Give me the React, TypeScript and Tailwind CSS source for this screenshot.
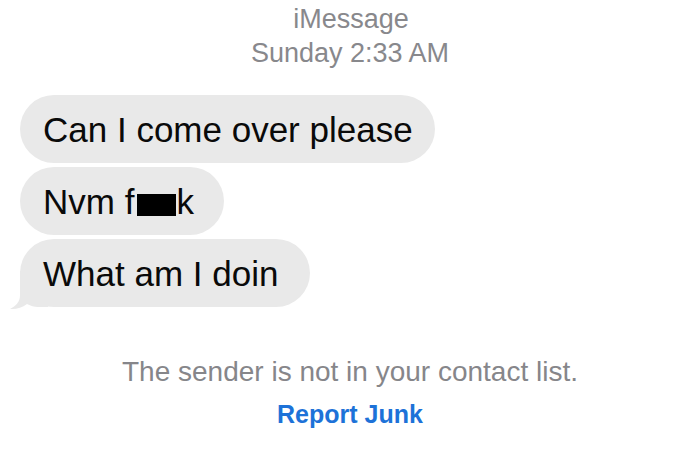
const Bubble = ({ width, children, tail }: { width: string; children: React.ReactNode; tail?: boolean }) => {
  return (
    <div className={`relative h-[68px] rounded-[34px] bg-[#e9e9e9] ${width}`}>
      {tail && (
        <svg
          className="absolute left-[-12px] top-[32px]"
          width="40"
          height="40"
          viewBox="0 0 40 40"
        >
          <path
            d="M12 0 L12 24 C12 31 8 35 2 38 C8 38.5 14 37 19 33 C23 35 26 36 30 36 L40 36 L40 0 Z"
            fill="#e9e9e9"
          />
        </svg>
      )}
      <p className="relative pl-[23px] pt-[2px] text-[35px] leading-[66px] text-[#0a0a0a] whitespace-nowrap">
        {children}
      </p>
    </div>
  );
};

const App = () => {
  return (
    <div
      className="w-[700px] h-[450px] overflow-hidden bg-white"
      style={{ fontFamily: '"Liberation Sans", Arial, sans-serif' }}
    >
      <div className="pt-[2px] flex flex-col items-center text-[27px] leading-[34px] text-[#88888c]">
        <p className="pl-[2px]">iMessage</p>
        <p>Sunday 2:33 AM</p>
      </div>

      <div className="mt-[25px] pl-[20px] flex flex-col gap-[4px]">
        <Bubble width="w-[415px]">Can I come over please</Bubble>
        <Bubble width="w-[204px]">
          Nvm f
          <span className="inline-block ml-[3px] w-[39px] h-[22px] bg-black align-[-2px]" />
          k
        </Bubble>
        <Bubble width="w-[290px]" tail>
          What am I doin
        </Bubble>
      </div>

      <div className="mt-[47px] flex flex-col items-center">
        <p className="text-[28px] leading-[36px] text-[#86868a]">
          The sender is not in your contact list.
        </p>
        <button className="mt-[6px] text-[25px] leading-[36px] font-bold text-[#1d72d8]">
          Report Junk
        </button>
      </div>
    </div>
  );
};

export default App;
